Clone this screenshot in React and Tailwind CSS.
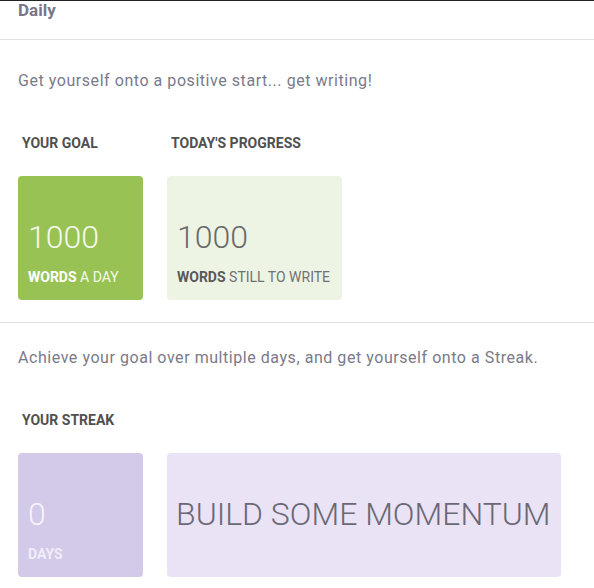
import React from "react";

const StatCard = ({ value, bold, rest, className, valueClass, boldClass, restClass }) => (
  <div className={`h-[124px] rounded pl-[10px] pt-[45px] ${className}`}>
    <div className={`text-[32px] leading-[32px] font-light ${valueClass}`}>{value}</div>
    <div className="mt-[17px] text-[14px] leading-[14px] uppercase">
      <span className={`font-bold ${boldClass}`}>{bold}</span>
      {rest && <span className={restClass}> {rest}</span>}
    </div>
  </div>
);

const Label = ({ children }) => (
  <h3 className="ml-[4px] text-[14px] leading-[20px] font-bold uppercase text-[#505050]">
    {children}
  </h3>
);

const App = () => {
  return (
    <div className="min-h-screen bg-white border-t border-[#222] font-['Roboto','Liberation_Sans',sans-serif]">
      {/* Header */}
      <div className="h-[39px] border-b border-[#e2e2e2] px-[18px] pt-[1px]">
        <h2 className="text-[17px] leading-[17px] font-bold text-[#77778c]">Daily</h2>
      </div>

      {/* Daily goal */}
      <section className="border-b border-[#e2e2e2] px-[18px] pt-[29px] pb-[22px]">
        <p className="text-[16px] leading-[24px] tracking-[0.55px] text-[#7a7a8a]">
          Get yourself onto a positive start... get writing!
        </p>
        <div className="mt-[40px] flex gap-[24px]">
          <div className="w-[125px]">
            <Label>Your Goal</Label>
            <div className="mt-[23px]">
              <StatCard
                value="1000"
                bold="Words"
                rest="a day"
                className="bg-[#98c354]"
                valueClass="text-[#f5f9ec]"
                boldClass="text-white"
                restClass="text-[#f5f9ec]"
              />
            </div>
          </div>
          <div className="w-[175px]">
            <Label>Today's Progress</Label>
            <div className="mt-[23px]">
              <StatCard
                value="1000"
                bold="Words"
                rest="still to write"
                className="bg-[#eef4e4]"
                valueClass="text-[#6a6a6a]"
                boldClass="text-[#595959]"
                restClass="text-[#717171]"
              />
            </div>
          </div>
        </div>
      </section>

      {/* Streak */}
      <section className="px-[18px] pt-[23px]">
        <p className="text-[16px] leading-[24px] tracking-[0.55px] text-[#7a7a8a]">
          Achieve your goal over multiple days, and get yourself onto a Streak.
        </p>
        <div className="mt-[40px]">
          <Label>Your Streak</Label>
        </div>
        <div className="mt-[23px] flex gap-[24px]">
          <div className="w-[125px]">
            <StatCard
              value="0"
              bold="Days"
              className="bg-[#d3c9e8]"
              valueClass="text-[#f6f3fb]"
              boldClass="text-[#f1edf8]"
            />
          </div>
          <div className="w-[394px] h-[124px] rounded bg-[#e9e3f5] pl-[9px] pt-[45px]">
            <div className="text-[32px] leading-[32px] font-light text-[#6b6875] uppercase whitespace-nowrap">
              Build some momentum
            </div>
          </div>
        </div>
      </section>
    </div>
  );
};

export default App;
